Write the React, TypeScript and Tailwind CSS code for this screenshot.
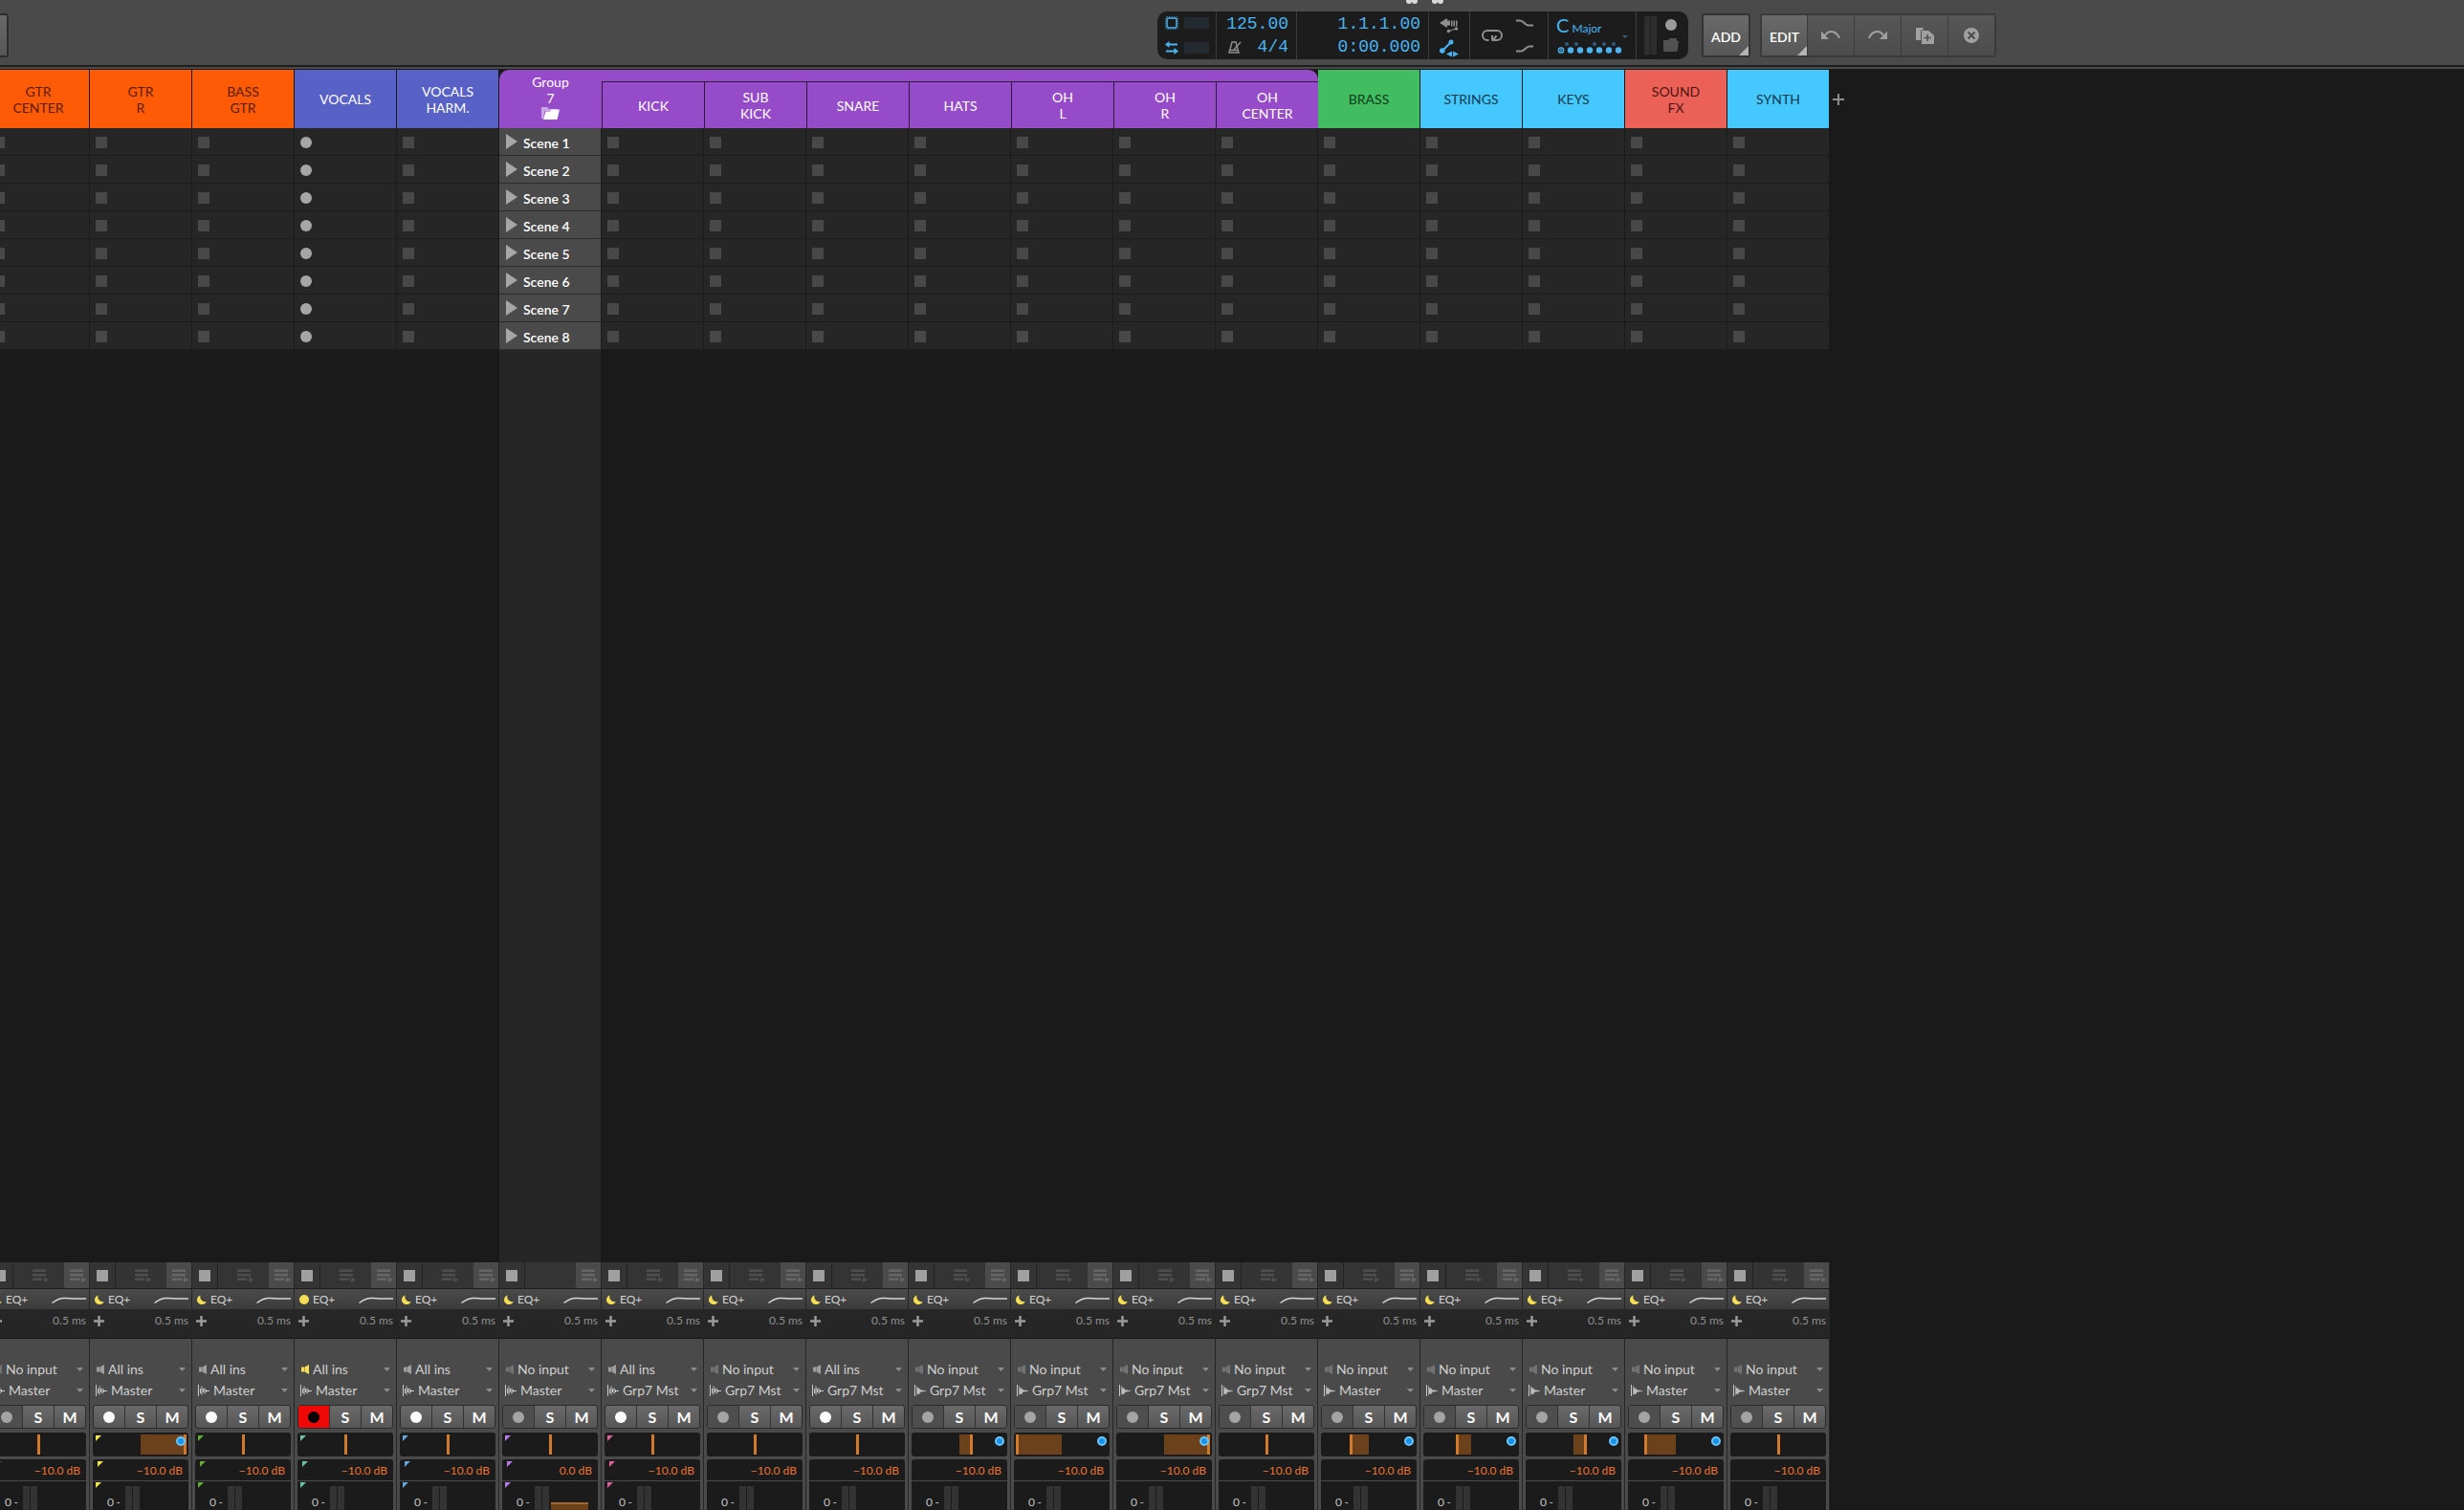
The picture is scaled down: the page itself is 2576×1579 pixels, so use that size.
import React, { useState } from "react";
import clsx from "clsx";

type Route = "Master" | "Grp7 Mst";

interface Track {
  name: string[];
  color: string;
  input: "All ins" | "No input";
  output: Route;
  kind?: "group" | "child";
  armed?: boolean;
  tag?: string;
  pan?: number;
  stereo?: boolean;
}

const orange = "bg-[#ff5a06] text-[#5c1e00]";
const blue = "bg-[#5861c6] text-white";
const purple = "bg-[#964bc9] text-white";
const green = "bg-[#41bc60] text-[#0d3a1a]";
const cyan = "bg-[#45c8ff] text-[#103a4e]";
const red = "bg-[#ec6157] text-[#4d1512]";

const tracks: Track[] = [
  { name: ["GTR", "CENTER"], color: orange, input: "No input", output: "Master", tag: "text-[#4fb79b]" },
  { name: ["GTR", "R"], color: orange, input: "All ins", output: "Master", tag: "text-[#f3e64b]", pan: 100 },
  { name: ["BASS", "GTR"], color: orange, input: "All ins", output: "Master", tag: "text-[#5fae33]" },
  { name: ["VOCALS"], color: blue, input: "All ins", output: "Master", tag: "text-[#6cc4a4]", armed: true },
  { name: ["VOCALS", "HARM."], color: blue, input: "All ins", output: "Master", tag: "text-[#62a5da]" },
  { name: ["Group", "7"], color: purple, input: "No input", output: "Master", tag: "text-[#b77be8]", kind: "group" },
  { name: ["KICK"], color: purple, input: "All ins", output: "Grp7 Mst", tag: "text-[#e0609f]", kind: "child" },
  { name: ["SUB", "KICK"], color: purple, input: "No input", output: "Grp7 Mst", kind: "child" },
  { name: ["SNARE"], color: purple, input: "All ins", output: "Grp7 Mst", kind: "child" },
  { name: ["HATS"], color: purple, input: "No input", output: "Grp7 Mst", kind: "child", pan: 25, stereo: true },
  { name: ["OH", "L"], color: purple, input: "No input", output: "Grp7 Mst", kind: "child", pan: -100, stereo: true },
  { name: ["OH", "R"], color: purple, input: "No input", output: "Grp7 Mst", kind: "child", pan: 100, stereo: true },
  { name: ["OH", "CENTER"], color: purple, input: "No input", output: "Grp7 Mst", kind: "child", stereo: true },
  { name: ["BRASS"], color: green, input: "No input", output: "Master", pan: -40, stereo: true },
  { name: ["STRINGS"], color: cyan, input: "No input", output: "Master", pan: -32, stereo: true },
  { name: ["KEYS"], color: cyan, input: "No input", output: "Master", pan: 25, stereo: true },
  { name: ["SOUND", "FX"], color: red, input: "No input", output: "Master", pan: -66, stereo: true },
  { name: ["SYNTH"], color: cyan, input: "No input", output: "Master", stereo: true },
];

const scenes = [1, 2, 3, 4, 5, 6, 7, 8];

const Divider = () => <div className="w-px self-stretch bg-[#3c3c3c]" />;

const QueueIcon = () => (
  <svg width="18" height="14" viewBox="0 0 18 14" fill="currentColor">
    <path d="M0 0.500h14v2.500H0zM0 5h14v2.500H0zM0 9.500h10.500v2.500H0z" />
    <path d="M12 8.500l5.500 2.750-5.500 2.750z" />
  </svg>
);

const MoonIcon = () => (
  <svg width="10" height="10" viewBox="0 0 10 10" fill="#f5dc55">
    <path d="M3.6 0.4A5 5 0 1 0 9.7 6.9A5 5 0 0 1 3.6 0.4z" />
  </svg>
);

const SpeakerIcon = () => (
  <svg width="8" height="10" viewBox="0 0 8 10" fill="currentColor">
    <path d="M0 2.500h3v5H0zM3.400 2.500L8 0v10L3.400 7.500z" />
  </svg>
);

const WaveIcon = ({ stereo }: { stereo?: boolean }) => (
  <svg width="12" height="12" viewBox="0 0 12 12" stroke="#c9c9c9" strokeWidth="1" fill="#bdbdbd">
    <path d="M0.500 0v12" />
    {stereo ? (
      <path d="M2.500 1.500v9l1.500-1.500 1 1 1-2.500 6-1-6-1-1-2-1 1z" strokeWidth="0.4" />
    ) : (
      <path d="M2.500 4v5M4 1.500v9M5.500 4v4M7 3.500v6M8.500 5v3M8.500 6.500H12" fill="none" />
    )}
  </svg>
);

const Corner = ({ className }: { className: string }) => (
  <svg width="6" height="6" viewBox="0 0 6 6" fill="currentColor" className={clsx("absolute", className)}>
    <path d="M0 0h6L0 6z" />
  </svg>
);

const TrackHeader = ({ track, last }: { track: Track; last: boolean }) => {
  const lines = track.name.map((line) => <span key={line}>{line}</span>);

  // children hang below the strip that continues the group's colour
  if (track.kind === "child") {
    return (
      <div className={clsx("flex h-[61px] flex-col pt-3", track.color, last && "rounded-tr-[10px]")}>
        <div className="flex flex-1 flex-col items-center justify-center border-l border-t border-[#2c1838]">
          {lines}
        </div>
      </div>
    );
  }
  return (
    <div
      className={clsx(
        "flex h-[61px] flex-col items-center",
        track.kind === "group" ? "rounded-tl-[10px] pt-1" : "mr-px justify-center",
        track.color
      )}
    >
      {lines}
      {track.kind === "group" && (
        <svg width="19" height="15" viewBox="0 0 19 15">
          <path d="M0 1h6l2 2h8v2H3.500L2 13H0z" fill="#cda6e6" />
          <path d="M4.500 5.500H9l2-2h8L16.500 14H2z" fill="#fff" />
        </svg>
      )}
    </div>
  );
};

const ClipSlots = ({ track }: { track: Track }) => (
  <div className="flex flex-col border-r border-[#1b1b1b]">
    {scenes.map((scene) =>
      track.kind === "group" ? (
        <button
          key={scene}
          className="flex h-[29px] items-center gap-1.5 border-b border-[#2c2c2c] bg-[#4a4a4a] pl-[7px] text-white"
        >
          <svg width="12" height="16" viewBox="0 0 12 16" fill="#a6a6a6">
            <path d="M0 0l12 8-12 8z" />
          </svg>
          <span className="pt-0.5 font-semibold">Scene {scene}</span>
        </button>
      ) : (
        <button
          key={scene}
          aria-label={`${track.name.join(" ")} slot ${scene}`}
          className="flex h-[29px] items-center border-b border-[#1d1d1d] bg-[#262626] pl-1.5 pt-px"
        >
          <span className={clsx("size-3", track.armed ? "rounded-full bg-[#a6a6a6]" : "bg-[#484848]")} />
        </button>
      )
    )}
  </div>
);

const RouteSelect = ({ label, value, icon }: { label: string; value: string; icon: React.ReactNode }) => (
  <label className="relative flex h-[22px] items-center">
    {icon}
    <select
      aria-label={label}
      defaultValue={value}
      className="h-[22px] min-w-0 flex-1 appearance-none bg-transparent pl-1 leading-[22px] text-[#cfcfcf] outline-none"
    >
      <option>{value}</option>
    </select>
    <svg width="7" height="4" viewBox="0 0 7 4" fill="#8c8c8c" className="pointer-events-none absolute right-[3px]">
      <path d="M0 0h7L3.500 4z" />
    </svg>
  </label>
);

const PanControl = ({ track }: { track: Track }) => {
  const pan = track.pan ?? 0;
  const left = Math.min(50, 50 + pan / 2);
  return (
    <label className="relative block h-[25px] rounded-[3px] bg-[#1b1b1b] px-0.5 py-0.5">
      <div className="relative h-[21px] overflow-hidden">
        <div className="absolute inset-y-0 bg-[#6b411b]" style={{ left: `${left}%`, width: `${Math.abs(pan) / 2}%` }} />
        <div
          className="absolute inset-y-0 w-[3px] bg-[#d17a2c]"
          style={{ left: `clamp(0px, calc(${50 + pan / 2}% - 1px), calc(100% - 3px))` }}
        />
      </div>
      {track.tag && <Corner className={clsx("left-[3px] top-[3px]", track.tag)} />}
      {pan !== 0 && (
        <span className="absolute right-[3px] top-1 size-[10px] rounded-full border-2 border-[#6cc4f6] bg-[#1693e8]" />
      )}
      <input type="range" aria-label="Pan" min={-100} max={100} defaultValue={pan} className="absolute inset-0 w-full opacity-0" />
    </label>
  );
};

const ChannelStrip = ({ track }: { track: Track }) => {
  const group = track.kind === "group";
  const live = track.input === "All ins";
  const [rec, setRec] = useState(!!track.armed);

  return (
    <div className="flex shrink-0 flex-col">
      <div className="flex h-7 border-b border-[#1e1e1e] bg-[#343434]">
        <button aria-label="Stop" className="flex w-[27px] items-center justify-center border-r border-[#222]">
          <span className="size-3 bg-[#a0a0a0]" />
        </button>
        <div className="flex flex-1 items-center justify-center pl-1 text-[#4e4e4e]">{!group && <QueueIcon />}</div>
        <button
          aria-label="Return to arranger"
          className="flex w-[26px] items-center justify-end bg-[#4b4b4b] pr-0.5 text-[#666]"
        >
          <QueueIcon />
        </button>
      </div>

      <button className="flex h-[21px] items-center bg-linear-to-b from-[#4a4a4a] to-[#3c3c3c] pl-[5px] pr-[3px] text-xs text-[#d2d2d2]">
        {track.armed ? <span className="size-[10px] rounded-full bg-[#f5dc55]" /> : <MoonIcon />}
        <span className="pl-1">EQ+</span>
        <svg width="36" height="10" viewBox="0 0 36 10" fill="none" stroke="#d6d6d6" strokeWidth="1.5" className="ml-auto">
          <path d="M0.500 8.500C5 5 7 4 12 3.500C18 3 20 4.200 24 4H36" />
        </svg>
      </button>

      <div className="flex h-[31px] items-start justify-between border-b border-[#191919] bg-[#262626] pl-1 pr-[3px] pt-1 text-xs leading-4 text-[#8f8f8f]">
        <button aria-label="Add device" className="pt-[3px]">
          <svg width="11" height="11" viewBox="0 0 11 11" stroke="#9a9a9a" strokeWidth="2.500">
            <path d="M5.500 0v11M0 5.500h11" />
          </svg>
        </button>
        0.5 ms
      </div>

      <div className="bg-[#4a4a4a] pl-[3px] pr-[3px] pt-[21px]">
        <div className="pl-1">
          <RouteSelect
            label="Input"
            value={track.input}
            icon={
              <span className={track.armed ? "text-[#f5dc55]" : live ? "text-[#9e9e9e]" : "text-[#737373]"}>
                <SpeakerIcon />
              </span>
            }
          />
        </div>
        <div className="pl-[3px]">
          <RouteSelect label="Output" value={track.output} icon={<WaveIcon stereo={track.stereo} />} />
        </div>

        <div className="mt-1 flex h-[25px] rounded-[3px] border border-[#2b2b2b] bg-linear-to-b from-[#6a6a6a] to-[#565656] text-base font-bold text-white">
          <button
            aria-label="Record arm"
            onClick={() => setRec(!rec)}
            className={clsx(
              "flex flex-1 items-center justify-center rounded-l-[2px]",
              rec ? "bg-[#ee0808]" : !live && "bg-[#4e4e4e]"
            )}
          >
            <span className={clsx("size-3 rounded-full", rec ? "bg-black" : live ? "bg-white" : "bg-[#a4a4a4]")} />
          </button>
          <button className="flex flex-1 items-center justify-center border-l border-[#333]">S</button>
          <button className="flex flex-1 items-center justify-center border-l border-[#333]">M</button>
        </div>

        <div className="mt-1">
          <PanControl track={track} />
        </div>

        <div className="relative mt-[3px] h-[53px] rounded-t-[3px] bg-[#1b1b1b] text-xs">
          {track.tag && <Corner className={clsx("left-[5px] top-0.5", track.tag)} />}
          {track.tag && <Corner className={clsx("left-[3px] top-6", track.tag)} />}
          <div className="flex h-[23px] items-center justify-end border-b border-[#4a4a4a] pr-1.5 pt-0.5 text-[#ea7430]">
            {group ? "0.0 dB" : "−10.0 dB"}
          </div>
          <div className="flex h-[30px] pl-[15px] pt-[5px] text-[#c4c4c4]">
            <span className="flex w-[19px] justify-between pr-[5px] pt-2 leading-[18px]">
              <span>0</span>
              <span>-</span>
            </span>
            <span className="mr-px w-[7px] bg-[#333]" />
            <span className="w-[7px] bg-[#333]" />
            {group && <span className="ml-0.5 mt-[17px] w-[39px] border-t-2 border-[#a8642a] bg-[#6b411b]" />}
          </div>
        </div>
      </div>
    </div>
  );
};

const TrackColumn = ({ track, last }: { track: Track; last: boolean }) => (
  <div className="flex w-[107px] shrink-0 flex-col">
    <TrackHeader track={track} last={last} />
    <ClipSlots track={track} />
    <div className={clsx("mr-px flex-1", track.kind === "group" && "bg-[#262626]")} />
    <div className="border-r border-[#262626]">
      <ChannelStrip track={track} />
    </div>
  </div>
);

const Transport = () => (
  <div className="flex h-[50px] rounded-[10px] bg-[#1c1c1c] text-[#4ab4f2]">
    <div className="flex w-[61px] flex-col justify-between py-[5px] pl-2">
      <div className="flex items-center gap-1.5">
        <svg width="14" height="14" viewBox="0 0 14 14" fill="none" stroke="currentColor">
          <rect x="2" y="2" width="10" height="10" rx="1.500" strokeWidth="1.500" />
          <rect x="0.700" y="0.700" width="12.600" height="12.600" rx="1" strokeWidth="1" strokeDasharray="1 1.500" />
        </svg>
        <span className="h-3 w-[26px] bg-[#232b31]" />
      </div>
      <div className="flex items-center gap-1.5">
        <svg width="14" height="14" viewBox="0 0 14 14" stroke="currentColor" strokeWidth="2" fill="currentColor">
          <path d="M4 3.500h9M1 10.500h9" />
          <path d="M0 3.500L4.500 0v7zM14 10.500L9.500 7v7z" stroke="none" />
        </svg>
        <span className="h-3 w-[26px] bg-[#232b31]" />
      </div>
    </div>
    <Divider />
    <div className="flex w-[83px] flex-col items-end justify-center pr-2 font-['Liberation_Mono',monospace] text-lg leading-6">
      <span>125.00</span>
      <span className="flex w-full items-center justify-between pl-3">
        <svg width="14" height="13" viewBox="0 0 14 13" fill="none" stroke="#8c8c8c" strokeWidth="1.500">
          <path d="M4 1h4l3 11H1z" />
          <path d="M6 9l7-8M2 9.500h8" />
        </svg>
        4/4
      </span>
    </div>
    <Divider />
    <div className="flex w-[137px] flex-col items-end justify-center pr-2 font-['Liberation_Mono',monospace] text-lg leading-6">
      <span>1.1.1.00</span>
      <span>0:00.000</span>
    </div>
    <Divider />
    <div className="flex w-[42px] flex-col items-center justify-between pb-0.5 pt-[7px]">
      <button aria-label="Automation write">
        <svg width="20" height="16" viewBox="0 0 20 16" fill="#8f8f8f">
          <path d="M0 5l8-5v2.500h3v5H8V10zM12 2.500h1.500v6H12zM14.500 2.500H16v6h-1.500zM17 2.500h1.500v6H17z" />
          <path d="M9 14l9-3.500" stroke="#8f8f8f" />
          <circle cx="9.500" cy="13.500" r="1.800" />
          <circle cx="17.500" cy="11" r="1.800" />
        </svg>
      </button>
      <button aria-label="Automation follow">
        <svg width="20" height="19" viewBox="0 0 20 19" fill="currentColor">
          <path d="M3 12l9-9" stroke="currentColor" strokeWidth="2" />
          <circle cx="12" cy="3" r="2.500" />
          <circle cx="2.800" cy="12" r="2.800" />
          <path d="M7 15.500l6-3v6zM20 15.500l-6-3v6z" />
        </svg>
      </button>
    </div>
    <Divider />
    <div className="flex w-[81px] items-center justify-between pl-3 pr-[15px]">
      <button aria-label="Loop">
        <svg width="22" height="14" viewBox="0 0 22 14" fill="none" stroke="#8f8f8f" strokeWidth="2">
          <path d="M7.500 12H6A5 5 0 0 1 6 2h10a5 5 0 0 1 0 10h-4.500M15.500 7.500L11.500 12M11 7v5.500" />
        </svg>
      </button>
      <div className="flex flex-col gap-[19px]">
        <svg width="18" height="8" viewBox="0 0 18 8" fill="none" stroke="#8f8f8f" strokeWidth="2">
          <path d="M0 1.500h4c4 0 5 5 9 5h5" />
        </svg>
        <svg width="18" height="8" viewBox="0 0 18 8" fill="none" stroke="#8f8f8f" strokeWidth="2">
          <path d="M0 6.500h5c4 0 5-5 9-5h4" />
        </svg>
      </div>
    </div>
    <Divider />
    <button className="relative flex w-[91px] flex-col items-start pl-2 pt-0.5">
      <span className="text-xl leading-6">
        C <span className="-ml-0.5 text-xs">Major</span>
      </span>
      <svg width="71" height="14" viewBox="0 0 71 14" fill="currentColor" className="mt-1">
        <g fill="#2f5f80">
          <circle cx="11" cy="4" r="2" />
          <circle cx="21" cy="4" r="2" />
          <circle cx="40" cy="4" r="2" />
          <circle cx="50" cy="4" r="2" />
          <circle cx="60" cy="4" r="2" />
        </g>
        <circle cx="5" cy="10.500" r="2.600" fill="none" stroke="currentColor" strokeWidth="1.500" />
        <circle cx="5" cy="10.500" r="1" />
        <circle cx="15" cy="10.500" r="3.200" />
        <circle cx="25" cy="10.500" r="3.200" />
        <circle cx="35" cy="10.500" r="3.200" />
        <circle cx="45" cy="10.500" r="3.200" />
        <circle cx="55" cy="10.500" r="3.200" />
        <circle cx="65" cy="10.500" r="3.200" />
      </svg>
      <svg width="6" height="3" viewBox="0 0 6 3" fill="#33617e" className="absolute right-2 top-[25px]">
        <path d="M0 0h6L3 3z" />
      </svg>
    </button>
    <Divider />
    <div className="flex w-[54px] items-center gap-1.5 pl-2">
      <span className="flex h-10 gap-px">
        <span className="w-1.5 bg-[#2e2e2e]" />
        <span className="w-1.5 bg-[#2e2e2e]" />
      </span>
      <span className="flex flex-col items-center gap-2">
        <span className="size-3 rounded-full bg-[#9a9a9a]" />
        <svg width="17" height="14" viewBox="0 0 17 14" fill="#515151">
          <path d="M1 2h5l1.500-2H15v3h2l-1.500 11H1z" />
        </svg>
      </span>
    </div>
  </div>
);

const MenuCorner = () => (
  <svg width="10" height="10" viewBox="0 0 10 10" fill="#b4b4b4" className="absolute bottom-0 right-0">
    <path d="M10 0v10H0z" />
  </svg>
);

const toolButton =
  "flex w-[49px] items-center justify-center border-l border-[#3c3c3c] bg-linear-to-b from-[#575757] to-[#4c4c4c] text-[#a0a0a0]";

const Toolbar = () => (
  <header className="relative h-[73px] shrink-0 bg-[#1e1e1e]">
    <div className="flex h-[68px] items-center overflow-hidden bg-[#4a4a4a] pt-1.5">
      <button
        aria-label="File"
        className="h-[46px] w-[9px] rounded-r-[3px] border-2 border-l-0 border-[#2e2e2e] bg-linear-to-b from-[#696969] to-[#575757]"
      />
      <div className="ml-[1201px] flex items-center">
        <Transport />
        <button className="relative ml-3.5 h-[46px] w-[51px] rounded-[3px] border-2 border-[#333] bg-linear-to-b from-[#6a6a6a] to-[#575757] pt-0.5 font-semibold text-white">
          ADD
          <MenuCorner />
        </button>
        <div className="ml-2.5 flex h-[46px] overflow-hidden rounded-[3px] border-2 border-[#3a3a3a]">
          <button className="relative w-[47px] bg-linear-to-b from-[#6a6a6a] to-[#575757] pt-0.5 font-semibold text-white">
            EDIT
            <MenuCorner />
          </button>
          <button aria-label="Undo" className={toolButton}>
            <svg width="20" height="12" viewBox="0 0 20 12">
              <path d="M19 9C16 1 8 0 4 6" fill="none" stroke="currentColor" strokeWidth="2" />
              <path d="M0 1.500V10h8z" fill="currentColor" />
            </svg>
          </button>
          <button aria-label="Redo" className={toolButton}>
            <svg width="20" height="12" viewBox="0 0 20 12">
              <path d="M1 9C4 1 12 0 16 6" fill="none" stroke="currentColor" strokeWidth="2" />
              <path d="M20 1.500V10h-8z" fill="currentColor" />
            </svg>
          </button>
          <button aria-label="Duplicate" className={toolButton}>
            <svg width="19" height="17" viewBox="0 0 19 17" fill="currentColor">
              <path d="M0 0h7.500v2.500H5V13H0z" />
              <path fillRule="evenodd" d="M6 3h7l6 5v9H6zM11.300 7v2.700H8.500v1.600h2.800V14h1.600v-2.700h2.800V9.700h-2.800V7z" />
            </svg>
          </button>
          <button aria-label="Delete" className={toolButton}>
            <svg width="16" height="16" viewBox="0 0 16 16">
              <circle cx="8" cy="8" r="8" fill="currentColor" />
              <path d="M4.500 4.500l7 7M11.500 4.500l-7 7" stroke="#4c4c4c" strokeWidth="2" />
            </svg>
          </button>
        </div>
      </div>
    </div>
    <div className="mt-0.5 h-0.5 bg-[#4a4a4a]" />
    <svg width="40" height="4" viewBox="0 0 40 4" fill="#d8d8d8" className="absolute left-[1470px] top-0">
      <circle cx="3" cy="1" r="3" />
      <circle cx="9" cy="1" r="3" />
      <circle cx="30" cy="1" r="3" />
      <circle cx="36" cy="1" r="3" />
    </svg>
  </header>
);

const App = () => (
  <div className="flex h-screen flex-col overflow-hidden bg-[#1a1a1a] font-[Lato,sans-serif] text-sm leading-[17px]">
    <Toolbar />
    <main className="-ml-[13px] flex min-h-0 flex-1">
      {tracks.map((track, i) => (
        <TrackColumn
          key={track.name.join(" ")}
          track={track}
          last={track.kind === "child" && tracks[i + 1].kind !== "child"}
        />
      ))}
      <button aria-label="Add track" className="flex h-[61px] w-[18px] items-center justify-center">
        <svg width="12" height="12" viewBox="0 0 12 12" stroke="#8f8f8f" strokeWidth="2">
          <path d="M6 0v12M0 6h12" />
        </svg>
      </button>
    </main>
  </div>
);

export default App;
